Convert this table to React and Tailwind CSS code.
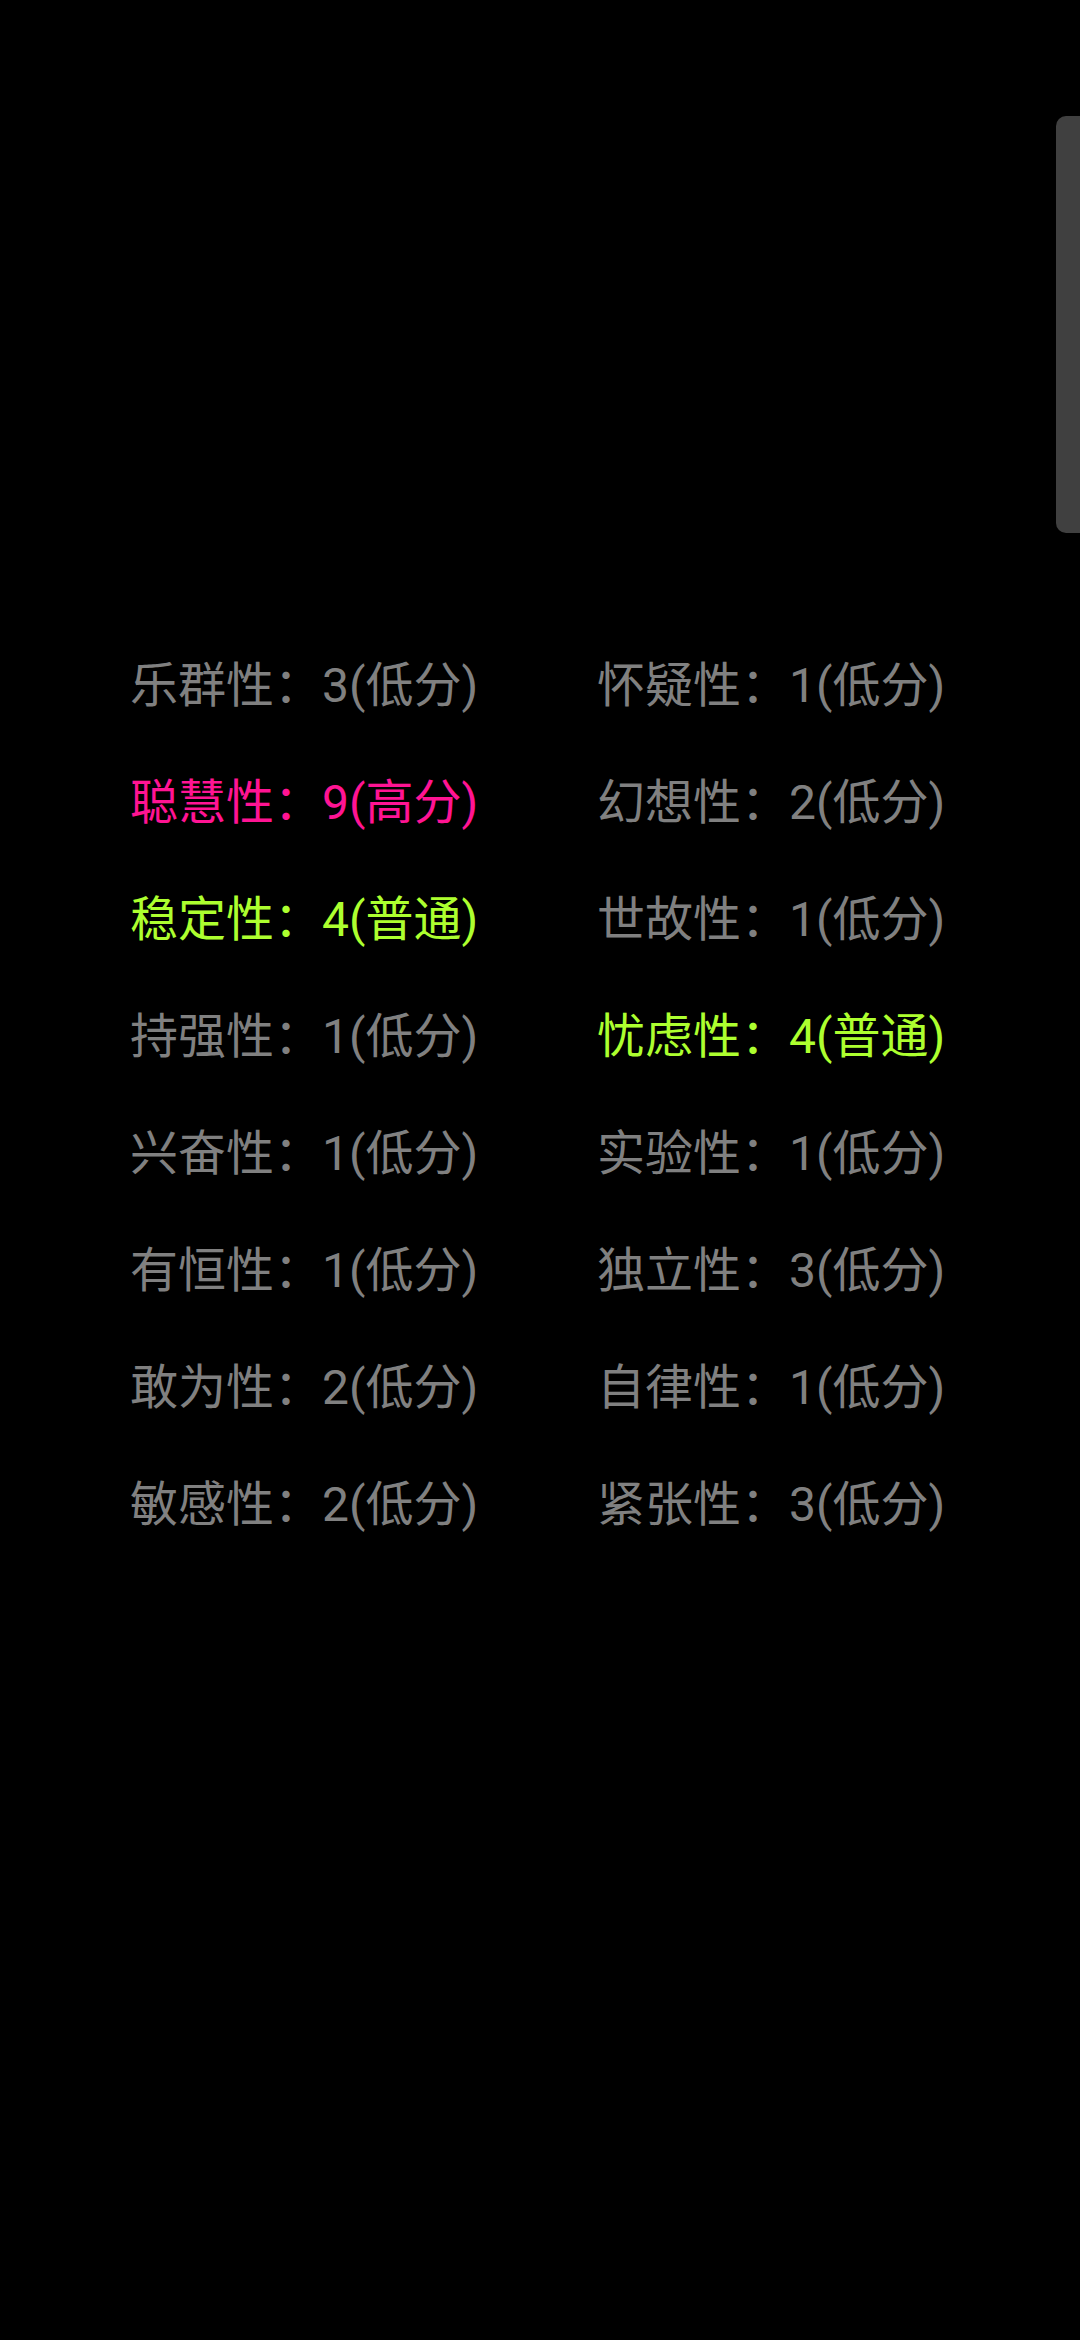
const rows = [
  [
    { name: '乐群性', score: 3, level: '低分' },
    { name: '怀疑性', score: 1, level: '低分' },
  ],
  [
    { name: '聪慧性', score: 9, level: '高分' },
    { name: '幻想性', score: 2, level: '低分' },
  ],
  [
    { name: '稳定性', score: 4, level: '普通' },
    { name: '世故性', score: 1, level: '低分' },
  ],
  [
    { name: '持强性', score: 1, level: '低分' },
    { name: '忧虑性', score: 4, level: '普通' },
  ],
  [
    { name: '兴奋性', score: 1, level: '低分' },
    { name: '实验性', score: 1, level: '低分' },
  ],
  [
    { name: '有恒性', score: 1, level: '低分' },
    { name: '独立性', score: 3, level: '低分' },
  ],
  [
    { name: '敢为性', score: 2, level: '低分' },
    { name: '自律性', score: 1, level: '低分' },
  ],
  [
    { name: '敏感性', score: 2, level: '低分' },
    { name: '紧张性', score: 3, level: '低分' },
  ],
]

const levelColor = {
  高分: 'text-[#ff1493]',
  普通: 'text-[#adff2f]',
  低分: 'text-[#808080]',
}

function Trait({ item }) {
  return (
    <div className={`h-[117px] flex items-center text-[48px] leading-none ${levelColor[item.level]}`}>
      {item.name}：{item.score}({item.level})
    </div>
  )
}

export default function App() {
  return (
    <div
      className="relative w-[1080px] h-[2340px] bg-black overflow-hidden"
      style={{ fontFamily: 'Roboto, "Noto Sans CJK SC", sans-serif' }}
    >
      {/* scrollbar thumb */}
      <div className="absolute right-0 top-[116px] w-[24px] h-[417px] rounded-l-[10px] bg-[#404040]" />

      <div className="pt-[627px] pl-[130px]">
        {rows.map((pair, i) => (
          <div key={i} className="grid grid-cols-[467px_auto]">
            <Trait item={pair[0]} />
            <Trait item={pair[1]} />
          </div>
        ))}
      </div>
    </div>
  )
}
